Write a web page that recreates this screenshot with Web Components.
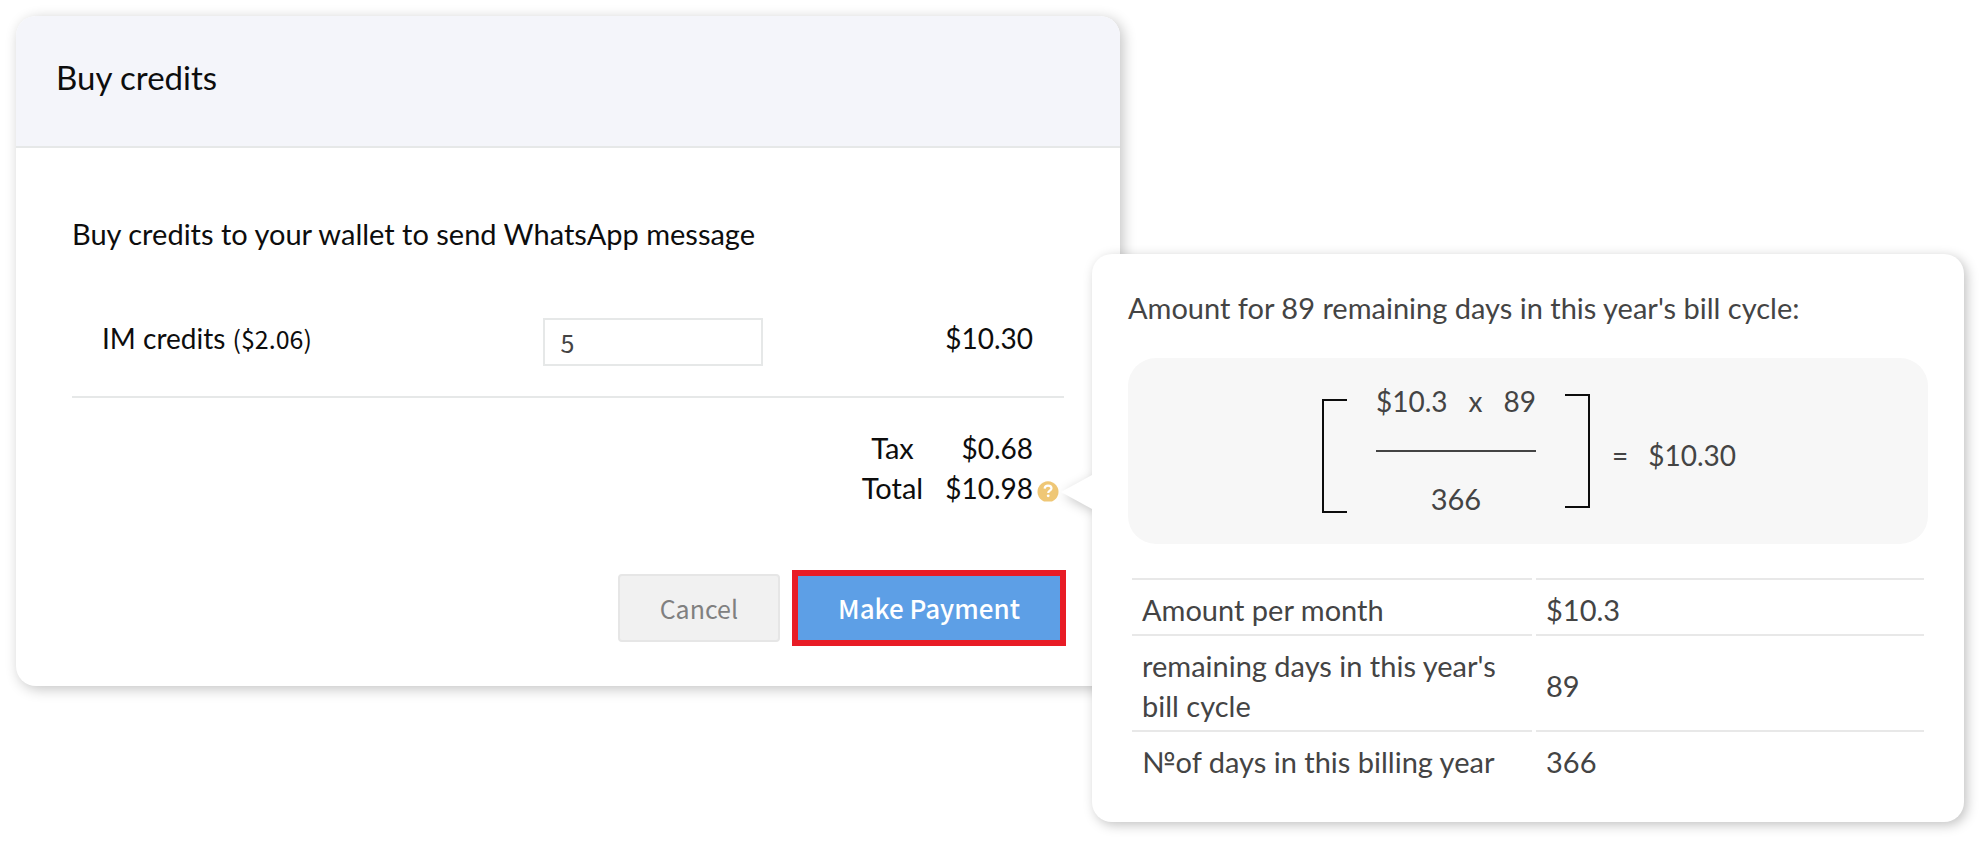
<!DOCTYPE html>
<html lang="en">
<head>
<meta charset="utf-8">
<title>Buy credits</title>
<style>
  body { margin: 0; background: #fff; color: #0d0d0d; font: 29px/40px Lato, "Liberation Sans", sans-serif; }
</style>
</head>
<body>
<credits-page>
  <buy-credits-card heading="Buy credits">
    <credit-line label="IM credits" unit-price="($2.06)" quantity="5" amount="$10.30"></credit-line>
    <bill-totals tax="$0.68" total="$10.98"></bill-totals>
    <action-button slot="actions">Cancel</action-button>
    <action-button slot="actions" primary>Make Payment</action-button>
  </buy-credits-card>
  <bill-popover slot="popover">
    <span slot="title">Amount for 89 remaining days in this year's bill cycle:</span>
    <prorata-formula>
      <span slot="price">$10.3</span>
      <span slot="days">89</span>
      <span slot="year">366</span>
      <span slot="result">$10.30</span>
    </prorata-formula>
    <bill-facts></bill-facts>
  </bill-popover>
</credits-page>

<script>
  function define(name, html) {
    const template = document.createElement('template');
    template.innerHTML = html;
    customElements.define(name, class extends HTMLElement {
      constructor() {
        super();
        this.attachShadow({ mode: 'open' }).append(template.content.cloneNode(true));
      }
      connectedCallback() {
        this.shadowRoot.querySelectorAll('[data-attr]').forEach(el => {
          const value = this.getAttribute(el.dataset.attr) || '';
          if (el.localName === 'input') el.value = value; else el.textContent = value;
        });
      }
    });
  }

  /* Two overlapping tracks: the popover covers the card's right edge. */
  define('credits-page', `
    <style>
      :host { display: grid; grid-template-columns: 1076fr 28px 844fr; align-items: start; padding: 16px 24px 24px 16px; }
      main { grid-area: 1 / 1 / 2 / 3; }
      aside { grid-area: 1 / 2 / 2 / 4; margin-top: 238px; }
    </style>
    <main><slot></slot></main>
    <aside><slot name="popover"></slot></aside>`);

  define('buy-credits-card', `
    <style>
      :host { display: block; border-radius: 20px; background: #fff; overflow: hidden; box-shadow: 3px 3px 14px rgba(0,0,0,.24); }
      header { padding: 39px 40px 47px; background: #f4f5fa; border-bottom: 2px solid #e6e8e8; }
      h1 { margin: 0; font-size: 33px; line-height: 44px; font-weight: 400; }
      .body { padding: 66px 56px 0; }
      p { margin: 0 0 64px; }
      .actions { display: flex; justify-content: flex-end; align-items: center; gap: 12px; padding: 62px 54px 40px; }
    </style>
    <header><h1 data-attr="heading"></h1></header>
    <div class="body">
      <p>Buy credits to your wallet to send WhatsApp message</p>
      <slot></slot>
    </div>
    <div class="actions"><slot name="actions"></slot></div>`);

  define('credit-line', `
    <style>
      :host { display: grid; grid-template-columns: 440fr 220px 270fr; align-items: start; height: 78px; padding: 0 31px 0 30px; border-bottom: 2px solid #e6e8e8; font-size: 28px; }
      small { font: 25px "Noto Sans CJK SC", sans-serif; line-height: 0; }
      input { box-sizing: border-box; width: 100%; height: 48px; padding: 0 16px; border: 2px solid #e6e8e8; background: #fff; color: #444; font: 25px "Noto Sans CJK SC", sans-serif; }
      output { text-align: right; }
    </style>
    <label for="qty"><span data-attr="label"></span> <small data-attr="unit-price"></small></label>
    <input id="qty" type="text" inputmode="numeric" data-attr="quantity">
    <output for="qty" data-attr="amount"></output>`);

  define('bill-totals', `
    <style>
      :host { display: block; padding: 30px 31px 0 0; }
      dl { display: grid; grid-template-columns: auto auto; justify-content: end; column-gap: 22px; margin: 0; }
      dt { text-align: center; }
      dd { position: relative; margin: 0; text-align: right; font-size: 28px; }
      button { position: absolute; left: 100%; top: 12px; width: 22px; height: 22px; margin-left: 4px; padding: 0; border: 0; border-radius: 50%; background: none; }
      svg { display: block; }
    </style>
    <dl>
      <dt>Tax</dt><dd data-attr="tax"></dd>
      <dt>Total</dt><dd><span data-attr="total"></span><button type="button" aria-label="How the total is worked out">
        <svg width="22" height="22" viewBox="0 0 22 22"><path d="M7 21.500A10.500 10.500 0 1 1 15 21.500Z" fill="#efc776"/><path d="M7.600 8.600c.2-2.200 1.700-3 3.500-3s3.400 1 3.400 2.700c0 2.400-3.300 2.300-3.300 4.700" fill="none" stroke="#fff" stroke-width="2.200"/><circle cx="11.200" cy="15.800" r="1.400" fill="#fff"/></svg>
      </button></dd>
    </dl>`);

  define('action-button', `
    <style>
      :host { display: block; }
      button { box-sizing: border-box; display: block; height: 68px; padding: 0 40px; border: 2px solid #e6e6e6; border-radius: 4px; background: #f1f1f1; color: #808080; font: 25px/36px "Noto Sans CJK SC", sans-serif; }
      :host([primary]) button { height: 76px; border: 6px solid #e81c26; border-radius: 0; background: #5d9fe6; color: #fff; font-size: 26px; font-weight: 500; }
    </style>
    <button type="button"><slot></slot></button>`);

  define('bill-popover', `
    <style>
      :host { display: block; position: relative; padding: 34px 36px 36px; border-radius: 20px; background: #fff; color: #444; filter: drop-shadow(3px 3px 6px rgba(0,0,0,.24)); }
      :host::before { content: ""; position: absolute; right: 100%; top: 221px; width: 31px; height: 34px; background: #fff; clip-path: polygon(100% 0, 0 50%, 100% 100%); }
      h2 { margin: 0 0 30px; font: inherit; }
    </style>
    <h2><slot name="title"></slot></h2>
    <slot></slot>`);

  define('prorata-formula', `
    <style>
      :host { display: flex; justify-content: center; align-items: flex-start; box-sizing: border-box; height: 186px; padding: 23px 0 0 2px; margin-bottom: 30px; border-radius: 28px; background: #f7f7f7; }
      .bracket { box-sizing: border-box; width: 25px; height: 114px; border: 2px solid #0d0d0d; }
      .open { margin-top: 18px; border-right: 0; }
      .close { margin-top: 13px; border-left: 0; }
      .fraction { width: 160px; margin: 0 29px; text-align: center; }
      .top { display: flex; justify-content: space-between; height: 69px; border-bottom: 2px solid #444; font-size: 28px; }
      .bottom { margin-top: 27px; }
      .result { margin: 54px 0 0 22px; display: flex; gap: 20px; font-size: 28px; }
    </style>
    <span class="bracket open"></span>
    <div class="fraction">
      <div class="top"><slot name="price"></slot><span>x</span><slot name="days"></slot></div>
      <div class="bottom"><slot name="year"></slot></div>
    </div>
    <span class="bracket close"></span>
    <div class="result"><span>=</span><slot name="result"></slot></div>`);

  define('bill-facts', `
    <style>
      :host { display: block; }
      table { width: 100%; table-layout: fixed; border-collapse: separate; border-spacing: 4px; }
      th, td { padding: 10px 10px 0; border-top: 2px solid #e8e8e8; text-align: left; font-weight: 400; vertical-align: middle; }
      .name { width: 380px; }
    </style>
    <table>
      <tbody>
        <tr><th class="name" scope="row">Amount per month</th><td>$10.3</td></tr>
        <tr><th scope="row">remaining days in this year's bill cycle</th><td>89</td></tr>
        <tr><th scope="row">№of days in this billing year</th><td>366</td></tr>
      </tbody>
    </table>`);
</script>
</body>
</html>
